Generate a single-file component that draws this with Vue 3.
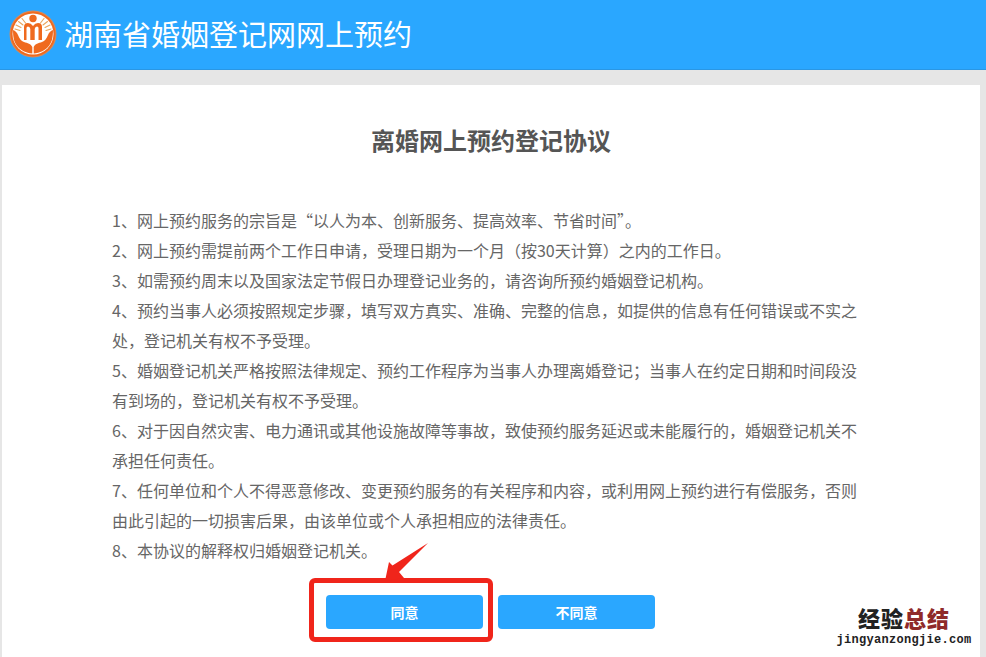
<script setup>
const items = [
  '1、网上预约服务的宗旨是“以人为本、创新服务、提高效率、节省时间”。',
  '2、网上预约需提前两个工作日申请，受理日期为一个月（按30天计算）之内的工作日。',
  '3、如需预约周末以及国家法定节假日办理登记业务的，请咨询所预约婚姻登记机构。',
  '4、预约当事人必须按照规定步骤，填写双方真实、准确、完整的信息，如提供的信息有任何错误或不实之处，登记机关有权不予受理。',
  '5、婚姻登记机关严格按照法律规定、预约工作程序为当事人办理离婚登记；当事人在约定日期和时间段没有到场的，登记机关有权不予受理。',
  '6、对于因自然灾害、电力通讯或其他设施故障等事故，致使预约服务延迟或未能履行的，婚姻登记机关不承担任何责任。',
  '7、任何单位和个人不得恶意修改、变更预约服务的有关程序和内容，或利用网上预约进行有偿服务，否则由此引起的一切损害后果，由该单位或个人承担相应的法律责任。',
  '8、本协议的解释权归婚姻登记机关。'
]
</script>

<template>
  <div class="page">
    <header class="header">
      <svg class="logo" viewBox="0 0 48 48" width="48" height="48">
        <circle cx="24" cy="24" r="23.5" fill="#d98a5a" />
        <circle cx="24" cy="24" r="22.5" fill="#ef6a1f" />
        <circle cx="24" cy="24" r="20.5" fill="#fff" />
        <g stroke="#e9a55c" stroke-width="1.1" stroke-linecap="round">
          <path d="M6 19l5 1.500M7 15l5 2.500M9.500 11.500l4.500 3.500M13 8.500l3.500 4.500M42 19l-5 1.500M41 15l-5 2.500M38.500 11.500l-4.500 3.500M35 8.500l-3.500 4.500" />
        </g>
        <circle cx="24" cy="8.500" r="3.700" fill="#ef6a1f" />
        <path d="M15 30V17q0-4 4-4 3 0 5 3 2-3 5-3 4 0 4 4v13h-3.500V18q0-1.500-1.500-1.500-2 0-2.300 2.500V30h-4.400V19q-.3-2.500-2.300-2.500-1.500 0-1.500 1.500v12z" fill="#ef6a1f" />
        <path d="M4 20c2.500 1 4 2.500 5 5 1.500 3.500 3 6 6 7 3.500 1 7 2 8.300 5v6.500c-6-.5-12-3-15.500-8C5 32 4 27 4 20z" fill="#ef6a1f" />
        <path d="M44 20c-2.500 1-4 2.500-5 5-1.500 3.500-3 6-6 7-3.500 1-7 2-8.300 5v6.500c6-.5 12-3 15.500-8C43 32 44 27 44 20z" fill="#ef6a1f" />
      </svg>
      <h1 class="site-title">湖南省婚姻登记网网上预约</h1>
    </header>

    <main class="card">
      <h2 class="title">离婚网上预约登记协议</h2>
      <div class="terms">
        <p v-for="item in items" :key="item">{{ item }}</p>
      </div>
      <div class="actions">
        <button class="btn" type="button">同意</button>
        <button class="btn" type="button">不同意</button>
      </div>
    </main>

    <div class="mark-box"></div>
    <svg class="arrow" viewBox="0 0 60 50" width="60" height="50">
      <path d="M53 8L24 37 29 43 10 46 14 27 17.500 30.500z" fill="#f0251b" />
    </svg>

    <div class="watermark">
      <div class="wm-cn">经验<span>总结</span></div>
      <div class="wm-en">jingyanzongjie.com</div>
    </div>
  </div>
</template>

<style scoped>
.page {
  position: relative;
  width: 986px;
  height: 657px;
  overflow: hidden;
  background: #e6e6e6;
  font-family: "Noto Sans CJK SC", "Liberation Sans", sans-serif;
}
.header {
  display: flex;
  align-items: center;
  gap: 7px;
  box-sizing: border-box;
  height: 70px;
  padding: 0 0 2px 9px;
  background: #2aa7ff;
  border-bottom: 1px solid #2a97e4;
}
.logo { flex: none; }
.site-title {
  margin: 0;
  font-size: 29px;
  font-weight: 400;
  color: #fff;
  line-height: 1;
}
.card {
  box-sizing: border-box;
  height: 572px;
  margin: 15px 6px 0 2px;
  padding: 41px 110px 0 110px;
  background: #fff;
}
.title {
  margin: 0;
  font-size: 24px;
  line-height: 28px;
  font-weight: 700;
  color: #555;
  text-align: center;
}
.terms {
  margin-top: 51px;
  font-size: 16px;
  line-height: 30px;
  color: #666;
}
.terms p { margin: 0; }
.actions {
  display: flex;
  gap: 15px;
  margin: 30px 0 0 214px;
}
.btn {
  width: 157px;
  height: 34px;
  padding: 0;
  border: 0;
  border-radius: 4px;
  background: #2aa7ff;
  color: #fff;
  font: 700 14px "Noto Sans CJK SC", "Liberation Sans", sans-serif;
}
.mark-box {
  position: absolute;
  left: 309px;
  top: 578px;
  width: 184px;
  height: 64px;
  box-sizing: border-box;
  border: 5px solid #f0251b;
  border-radius: 6px;
}
.arrow {
  position: absolute;
  left: 375px;
  top: 535px;
}
.watermark {
  position: absolute;
  left: 836px;
  top: 604px;
  width: 136px;
  text-align: center;
}
.wm-cn {
  font-size: 22px;
  line-height: 26px;
  font-weight: 900;
  letter-spacing: 1px;
  color: #222;
}
.wm-cn span { color: #8f2a2a; }
.wm-en {
  margin-top: 3px;
  font-family: "Liberation Mono", monospace;
  font-size: 12px;
  font-weight: 700;
  line-height: 14px;
  letter-spacing: 0.3px;
  color: #222;
}
</style>
